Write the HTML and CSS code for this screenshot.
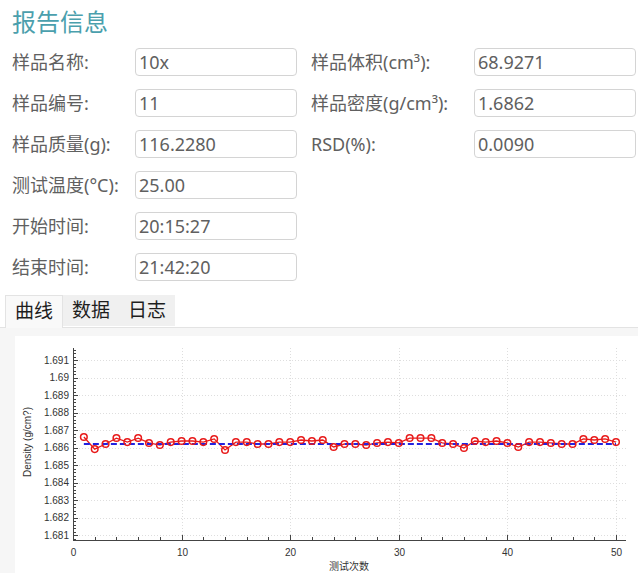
FILE: index.html
```html
<!DOCTYPE html>
<html lang="zh-CN">
<head>
    <meta charset="UTF-8">
    <meta name="viewport" content="width=device-width, initial-scale=1.0">
    <title>报告信息</title>
    <link rel="stylesheet" href="styles.css">
</head>
<body>
    <!-- 报告头 -->
    <h1 class="title">报告信息</h1>

    <!-- 样品信息 -->
    <div class="info-grid">
        <label class="field-label first">样品名称:</label>
        <input class="field-value" type="text" value="10x" readonly>
        <label class="field-label second">样品体积(cm³):</label>
        <input class="field-value" type="text" value="68.9271" readonly>

        <label class="field-label first">样品编号:</label>
        <input class="field-value" type="text" value="11" readonly>
        <label class="field-label second">样品密度(g/cm³):</label>
        <input class="field-value" type="text" value="1.6862" readonly>

        <label class="field-label first">样品质量(g):</label>
        <input class="field-value" type="text" value="116.2280" readonly>
        <label class="field-label second">RSD(%):</label>
        <input class="field-value" type="text" value="0.0090" readonly>

        <label class="field-label first">测试温度(°C):</label>
        <input class="field-value" type="text" value="25.00" readonly>

        <label class="field-label first">开始时间:</label>
        <input class="field-value" type="text" value="20:15:27" readonly>

        <label class="field-label first">结束时间:</label>
        <input class="field-value" type="text" value="21:42:20" readonly>
    </div>

    <!-- 标签页 -->
    <div class="tabs">
        <div class="tab active">曲线</div>
        <div class="tab">数据</div>
        <div class="tab">日志</div>
    </div>

    <div class="tab-panel">
        <div class="chart-box">
            <svg id="density-chart" width="623" height="238" viewBox="15 335 623 238"></svg>
        </div>
    </div>

    <script src="chart.js"></script>
</body>
</html>
```

FILE: styles.css
```css
/* 공통 */
body {
    margin: 0;
    font-family: "Noto Sans", "Noto Sans CJK SC", sans-serif;
    background-color: #fff;
    color: #606060;
    overflow: hidden;
}

/* 标题 */
.title {
    margin: 0;
    padding: 7px 12px 0;
    font-size: 24px;
    line-height: 30px;
    font-weight: normal;
    color: #4b9fad;
}

/* 样品信息表格 */
.info-grid {
    display: grid;
    grid-template-columns: 123px 162px 177px 162px;
    grid-auto-rows: 28px;
    row-gap: 13px;
    margin-top: 11px;
    padding-left: 12px;
}
.field-label {
    font-size: 18px;
    line-height: 28px;
    white-space: nowrap;
}
.field-label.first {
    grid-column: 1;
}
.field-label.second {
    padding-left: 14px;
}
.field-value {
    box-sizing: border-box;
    height: 28px;
    width: 162px;
    margin: 0;
    padding: 0 3px;
    border: 1px solid #d4d4d4;
    border-radius: 4px;
    background-color: #fff;
    font-family: inherit;
    font-size: 18px;
    color: #606060;
    outline: none;
}

/* 标签页 */
.tabs {
    display: flex;
    margin-top: 14px;
    padding-left: 5px;
    border-bottom: 1px solid #e3e3e3;
}
.tab {
    height: 31px;
    line-height: 31px;
    padding: 0 9px;
    font-size: 19px;
    color: #1e1e1e;
    background-color: #f0f0f0;
}
.tab.active {
    height: 31px;
    background-color: #f9f9f9;
    border: 1px solid #e3e3e3;
    border-bottom: none;
    margin-bottom: -1px;
    padding-bottom: 1px;
}

.tab-panel {
    background-color: #f6f6f6;
    padding: 8px 0 0 15px;
    height: 246px;
    box-sizing: border-box;
}
.chart-box {
    background-color: #fff;
    height: 238px;
}
.chart-box svg {
    display: block;
    font-family: "Liberation Sans", Arial, sans-serif;
}
```

FILE: chart.js
```js
// 密度曲线: 50 次测试
const densities = [
    1.68660, 1.68591, 1.68620, 1.68654, 1.68631, 1.68654, 1.68626, 1.68614, 1.68631, 1.68637,
    1.68637, 1.68631, 1.68649, 1.68586, 1.68631, 1.68631, 1.68620, 1.68620, 1.68631, 1.68631,
    1.68643, 1.68637, 1.68643, 1.68603, 1.68620, 1.68620, 1.68614, 1.68626, 1.68631, 1.68626,
    1.68654, 1.68654, 1.68654, 1.68626, 1.68620, 1.68597, 1.68637, 1.68631, 1.68637, 1.68626,
    1.68603, 1.68631, 1.68631, 1.68626, 1.68620, 1.68620, 1.68649, 1.68643, 1.68649, 1.68631
];
const mean = 1.6862;

const NS = 'http://www.w3.org/2000/svg';
const svg = document.getElementById('density-chart');

// 绘图区 (页面坐标)
const plotLeft = 73, plotRight = 626, plotTop = 347, plotBottom = 539;
const sx = n => plotLeft + n * 10.86;
const sy = v => 359 + (1.691 - v) * 17500;

function add(tag, attrs, text) {
    const el = document.createElementNS(NS, tag);
    for (const k in attrs) el.setAttribute(k, attrs[k]);
    if (text !== undefined) el.textContent = text;
    svg.appendChild(el);
    return el;
}

// 网格
for (let k = 0; k <= 10; k++) {
    const y = Math.round(359 + k * 17.5) + 0.5;
    add('line', { x1: plotLeft, y1: y, x2: plotRight, y2: y, stroke: '#dedede', 'stroke-dasharray': '1 2' });
}
for (let n = 10; n <= 50; n += 10) {
    const x = Math.round(sx(n)) + 0.5;
    add('line', { x1: x, y1: plotTop, x2: x, y2: plotBottom, stroke: '#dedede', 'stroke-dasharray': '1 2' });
}

// 坐标轴
add('line', { x1: plotLeft + 0.5, y1: plotTop, x2: plotLeft + 0.5, y2: plotBottom + 0.5, stroke: '#444' });
add('line', { x1: plotLeft, y1: plotBottom + 0.5, x2: plotRight, y2: plotBottom + 0.5, stroke: '#444' });

// y 轴刻度
for (let y = 359 - 3.5 * 3; y < plotBottom; y += 3.5) {
    const yy = Math.round(y) + 0.5;
    const step = (y - 359) / 17.5;
    const major = Math.abs(step - Math.round(step)) < 0.01;
    add('line', { x1: plotLeft, y1: yy, x2: plotLeft + (major ? 5 : 3), y2: yy, stroke: '#444' });
}
for (let k = 0; k <= 10; k++) {
    const y = 359 + k * 17.5;
    const label = (1.691 - k * 0.001).toFixed(3).replace(/0$/, '');
    add('text', { x: 69, y: y + 3.5, 'text-anchor': 'end', 'font-size': 10, fill: '#333' }, label);
}

// x 轴刻度
for (let n = 0; n <= 50; n += 2) {
    const x = Math.round(sx(n)) + 0.5;
    add('line', { x1: x, y1: plotBottom, x2: x, y2: plotBottom - 3, stroke: '#444' });
}
for (let n = 0; n <= 50; n += 10) {
    const x = Math.round(sx(n)) + 0.5;
    add('line', { x1: x, y1: plotBottom, x2: x, y2: plotBottom - 5, stroke: '#444' });
    add('text', { x: x, y: 554.5, 'text-anchor': 'middle', 'font-size': 10, fill: '#333' }, n);
}

// 轴标题
add('text', { x: 349, y: 569, 'text-anchor': 'middle', 'font-size': 10, fill: '#333',
    'font-family': '"Noto Sans CJK SC", sans-serif' }, '测试次数');
add('text', { x: 31, y: 441, 'text-anchor': 'middle', 'font-size': 10, fill: '#333',
    transform: 'rotate(-90 31 441)' }, 'Density (g/cm?)');

// 数据曲线
const pts = densities.map((v, i) => sx(i + 1).toFixed(1) + ',' + sy(v).toFixed(1)).join(' ');
add('polyline', { points: pts, fill: 'none', stroke: '#e81a1a', 'stroke-width': 1.3 });

// 平均值
add('line', { x1: sx(1), y1: sy(mean), x2: sx(50), y2: sy(mean),
    stroke: '#2222e0', 'stroke-width': 2, 'stroke-dasharray': '6 3' });

densities.forEach((v, i) => {
    add('circle', { cx: sx(i + 1), cy: sy(v), r: 3.3, fill: 'none', stroke: '#e81a1a', 'stroke-width': 1.5 });
});
```
